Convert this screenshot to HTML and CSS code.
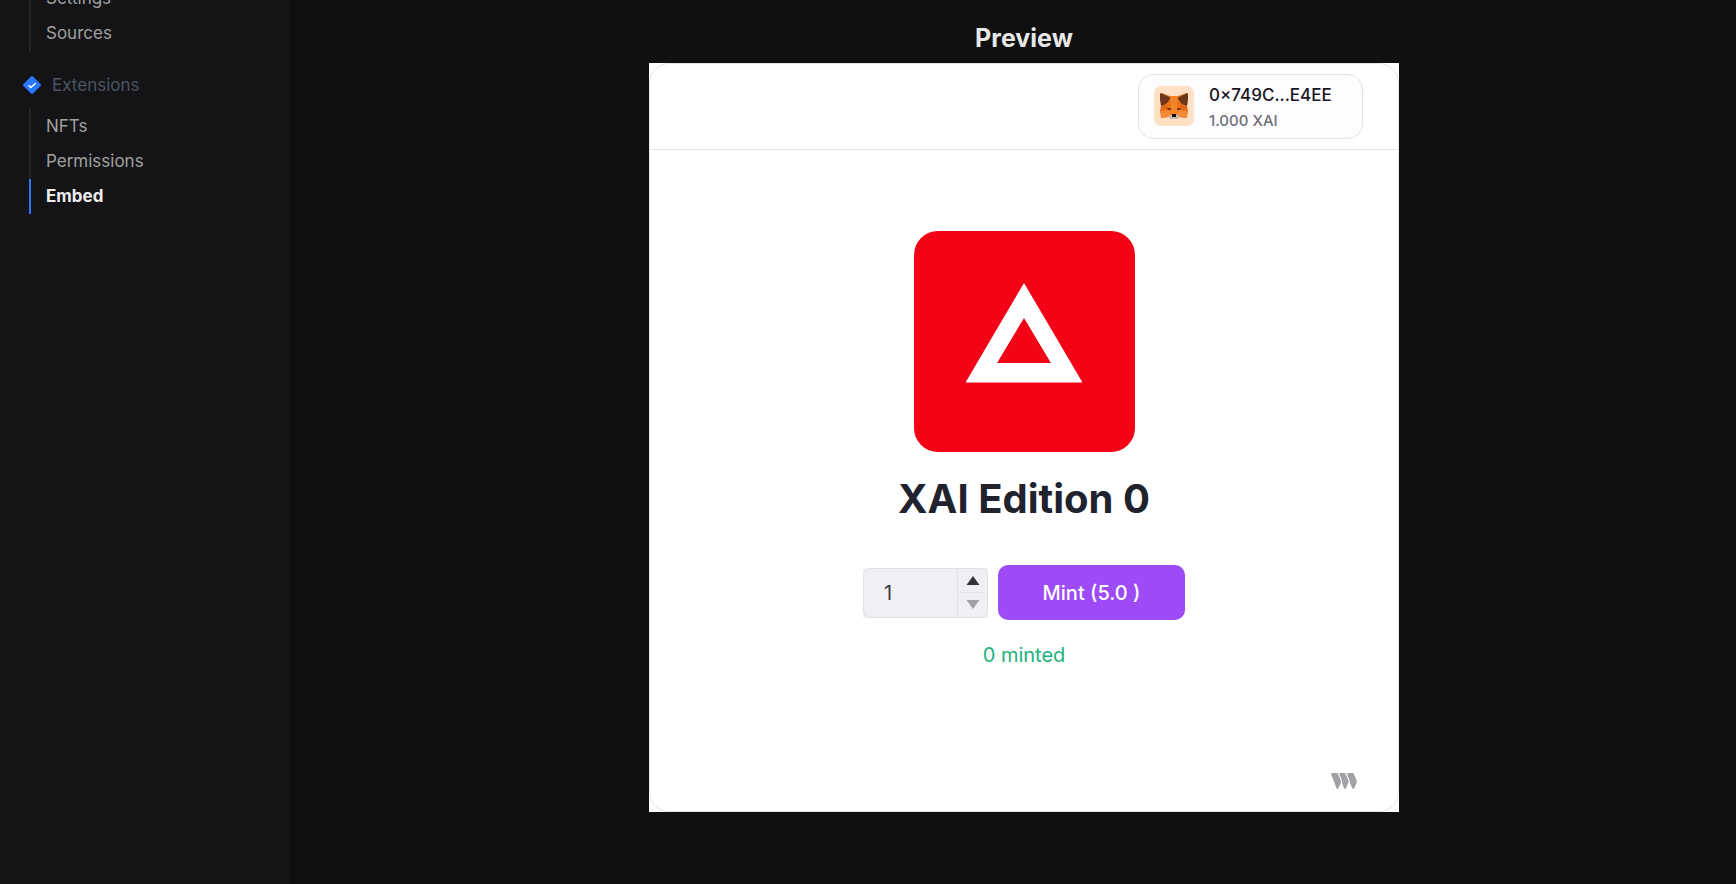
FILE: index.html
```html
<!DOCTYPE html>
<html lang="en">
<head>
    <meta charset="utf-8">
    <title>Embed</title>
    <link rel="stylesheet" href="styles.css">
</head>
<body>
    <div class="layout">
        <nav class="sidebar">
            <ul class="nav-list scrolled">
                <li><a href="#settings">Settings</a></li>
                <li><a href="#sources">Sources</a></li>
            </ul>
            <div class="nav-heading">
                <svg width="18" height="18" viewBox="0 0 18 18" aria-hidden="true">
                    <path d="M8 .5a1.4 1.4 0 0 1 2 0L17.5 8a1.4 1.4 0 0 1 0 2L10 17.5a1.4 1.4 0 0 1-2 0L.5 10a1.4 1.4 0 0 1 0-2z" fill="#2b76ff"/>
                    <path d="M5.5 9.3l2.300 2.200 4.900-4.300" fill="none" stroke="#fff" stroke-width="1.500"/>
                </svg>
                <span>Extensions</span>
            </div>
            <ul class="nav-list">
                <li><a href="#nfts">NFTs</a></li>
                <li><a href="#permissions">Permissions</a></li>
                <li><a href="#embed" class="active">Embed</a></li>
            </ul>
        </nav>

        <main class="content">
            <h2>Preview</h2>
            <div class="frame">
                <div class="card">
                    <header class="card-header">
                        <button type="button" class="wallet">
                            <svg width="40" height="40" viewBox="0 0 40 40" aria-hidden="true">
                                <rect width="40" height="40" rx="7" fill="#ffe0c5"/>
                                <path d="M7 7l9 3h8l9-3v11l-1 4 2 3-2 7-8-1-2 2h-4l-2-2-8 1-2-7 2-3-1-4z" fill="#e9701c"/>
                                <path d="M6 8l1-1 10 5-5 6-5 2-1-6zM34 8l-1-1-10 5 5 6 5 2 1-6z" fill="#6d3718"/>
                                <path d="M16 10h8l-1 10 2 6-3 3h-4l-3-3 2-6z" fill="#f28427"/>
                                <path d="M7 20l6-1 3 6-10 1zM33 20l-6-1-3 6 10 1z" fill="#e06718"/>
                                <path d="M6 25l9-1 2 6-10 2zM34 25l-9-1-2 6 10 2z" fill="#f58a35"/>
                                <path d="M13 22l4 0 0 2-3 0zM27 22l-4 0 0 2 3 0z" fill="#7a3512"/>
                                <path d="M15 29h10l1 2-3 2h-6l-3-2z" fill="#c9b8a8"/>
                                <path d="M18 28h4v3h-4z" fill="#121212"/>
                            </svg>
                            <span class="wallet-info">
                                <span class="address">0×749C...E4EE</span>
                                <span class="balance">1.000 XAI</span>
                            </span>
                        </button>
                    </header>

                    <div class="card-body">
                        <svg width="221" height="221" viewBox="0 0 221 221" role="img" aria-label="XAI">
                            <rect width="221" height="221" rx="24" fill="#f20316"/>
                            <path d="M110 52L168.500 151.500h-117zM110 87L83 132h54z" fill="#fff" fill-rule="evenodd"/>
                        </svg>
                        <h1>XAI Edition 0</h1>
                        <form class="mint-form">
                            <div class="quantity">
                                <div class="quantity-box">
                                    <input type="number" value="1" min="1" aria-label="Quantity">
                                    <div class="steppers">
                                        <button type="button" aria-label="Increase">
                                            <svg width="14" height="9" viewBox="0 0 14 9"><path d="M7 0L13.500 9H.5z" fill="#333338"/></svg>
                                        </button>
                                        <button type="button" aria-label="Decrease" disabled>
                                            <svg width="14" height="9" viewBox="0 0 14 9"><path d="M7 9L13.500 0H.5z" fill="#a2a1a6"/></svg>
                                        </button>
                                    </div>
                                </div>
                            </div>
                            <button type="button" class="mint-button">Mint (5.0 )</button>
                        </form>
                        <p class="minted">0 minted</p>
                    </div>

                    <footer class="card-footer">
                        <a href="#thirdweb" aria-label="thirdweb">
                            <svg width="26" height="16" viewBox="0 0 26 16" fill="#a2a1a6">
                                <path d="M1 0h4.800q.8 0 1.200 1l2.800 6.500q.5 1 0 2.200L7.600 15q-1 1.800-2.200 0L.2 1.500Q-.1.200 1 0z"/>
                                <path d="M9.200 0h4.200q.8 0 1.200 1l2.800 6.500q.5 1 0 2.200L15.200 15q-1 1.800-2.200 0l-1.900-4.500q.4-1.300-.2-3L8.300 1.300Q8 .2 9.200 0z"/>
                                <path d="M17 0h4.600q.8 0 1.200 1l2.800 6.500q.5 1 0 2.200L23.400 15q-1 1.800-2.200 0l-2.500-5.500q.3-1-.1-2L16.100 1.300Q15.800.2 17 0z"/>
                            </svg>
                        </a>
                    </footer>
                </div>
            </div>
        </main>
    </div>
</body>
</html>
```

FILE: styles.css
```css
* {
    box-sizing: border-box;
}

body {
    font-family: Inter, sans-serif;
    margin: 0;
    background-color: #101010;
    color: #e8e8e8;
}

button,
input {
    font-family: inherit;
}

svg {
    display: block;
}

.layout {
    display: flex;
    height: 100vh;
    overflow: hidden;
}

.sidebar {
    flex: 0 0 289px;
    padding-left: 23px;
    background: #141416;
    overflow: hidden;
}

.nav-list {
    list-style: none;
    margin: 0 0 0 6px;
    padding: 0;
}

/* first section is partly scrolled out of view */
.nav-list.scrolled {
    margin-top: -19px;
}

.nav-list a {
    display: block;
    padding-left: 15px;
    border-left: 2px solid #242427;
    color: #a0a0a0;
    font-size: 17px;
    line-height: 35px;
    text-decoration: none;
}

.nav-list a.active {
    border-left-color: #2b76ff;
    color: #ededed;
    font-weight: 700;
}

.nav-heading {
    display: flex;
    align-items: center;
    gap: 11px;
    height: 48px;
    margin-bottom: 10px;
    padding-top: 20px;
    color: #4b5563;
    font-size: 17px;
}

.content {
    flex: 1;
    display: flex;
    flex-direction: column;
    align-items: center;
    padding: 23px 0 0 23px;
}

h2 {
    margin: 0 0 10px;
    font-size: 25px;
    line-height: 30px;
    font-weight: 700;
}

.frame {
    width: 100%;
    max-width: 750px;
    background: #fff;
}

.card {
    display: flex;
    flex-direction: column;
    border: 1px solid #e4e4e7;
    border-radius: 20px;
}

.card-header {
    display: flex;
    justify-content: flex-end;
    padding: 10px 35px;
    border-bottom: 1px solid #e2e2e5;
}

.wallet {
    display: flex;
    align-items: center;
    gap: 15px;
    width: 225px;
    height: 65px;
    padding: 0 15px 2px;
    background: #fdfcfe;
    border: 1px solid #e4e2e6;
    border-radius: 15px;
    text-align: left;
    cursor: pointer;
}

.wallet-info {
    display: flex;
    flex-direction: column;
    gap: 5px;
    padding-top: 3px;
}

.address {
    color: #1a1523;
    font-size: 17px;
    line-height: 22px;
    font-weight: 500;
}

.balance {
    color: #6f6e77;
    font-size: 15px;
    line-height: 20px;
    font-weight: 500;
}

.card-body {
    display: flex;
    flex-direction: column;
    align-items: center;
    padding-top: 81px;
}

h1 {
    margin: 23px 0 42px;
    color: #20232e;
    font-size: 40px;
    line-height: 48px;
    font-weight: 700;
}

.mint-form {
    display: flex;
    align-items: center;
    gap: 10px;
}

.quantity {
    width: 125px;
    background: #f0eff4;
}

.quantity-box {
    display: flex;
    height: 50px;
    border: 1px solid #e0dfe4;
    border-radius: 8px;
}

.quantity input {
    flex: 1;
    min-width: 0;
    padding: 0 20px;
    background: none;
    border: none;
    outline: none;
    color: #3a3940;
    font-size: 20px;
    appearance: textfield;
}

.quantity input::-webkit-inner-spin-button {
    appearance: none;
    margin: 0;
}

.steppers {
    display: flex;
    flex-direction: column;
    width: 30px;
    border-left: 1px solid #e4e3e8;
}

.steppers button {
    flex: 1;
    display: flex;
    align-items: center;
    justify-content: center;
    padding: 0;
    background: none;
    border: none;
}

.steppers button + button {
    border-top: 1px solid #e6e5ea;
}

.mint-button {
    width: 187px;
    height: 55px;
    background: #9d4bf6;
    border: none;
    border-radius: 10px;
    color: #fff;
    font-size: 20px;
    font-weight: 500;
    cursor: pointer;
}

.minted {
    margin: 20px 0 0;
    color: #1bb27c;
    font-size: 20px;
    line-height: 30px;
}

.card-footer {
    display: flex;
    justify-content: flex-end;
    padding: 103px 41px 22px;
}
```
